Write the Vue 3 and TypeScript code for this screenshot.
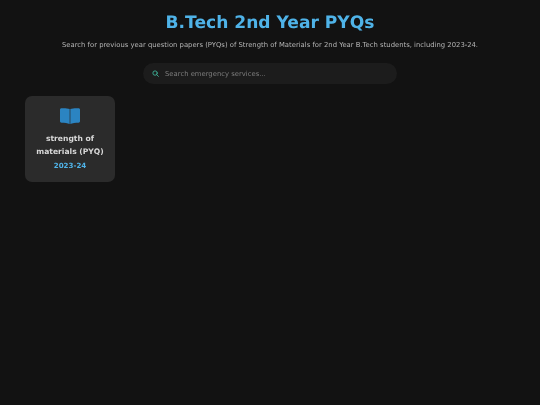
<script setup lang="ts">
interface Paper {
  title: string
  year: string
}
const papers: Paper[] = [{ title: 'strength of materials (PYQ)', year: '2023-24' }]
</script>

<template>
  <main class="page">
    <h1 class="title">B.Tech 2nd Year PYQs</h1>
    <p class="subtitle">Search for previous year question papers (PYQs) of Strength of Materials for 2nd Year B.Tech students, including 2023-24.</p>
    <div class="search">
      <svg class="search-icon" viewBox="0 0 24 24" fill="none" stroke="#3fb59a" stroke-width="3" stroke-linecap="round">
        <circle cx="10.500" cy="10.500" r="7.500" />
        <path d="M16 16l6 6" />
      </svg>
      <input class="search-input" type="text" placeholder="Search emergency services..." />
    </div>
    <section class="grid">
      <article v-for="paper in papers" :key="paper.title" class="card">
        <svg class="book" viewBox="0 0 40 32" fill="#2b84c2">
          <path d="M3 .500C9 .200 15.500 .500 19.300 2.200V32C15.500 30.300 9 29.500 3 29.500c-1.700 0-3-1.100-3-2.800V3.300C0 1.600 1.300.500 3 .500z" />
          <path d="M37 .500C31 .200 24.500 .500 20.700 2.200V32C24.500 30.300 31 29.500 37 29.500c1.700 0 3-1.100 3-2.800V3.300c0-1.700-1.300-2.800-3-2.800z" />
        </svg>
        <h2 class="card-title">{{ paper.title }}</h2>
        <span class="card-year">{{ paper.year }}</span>
      </article>
    </section>
  </main>
</template>

<style>
html, body { margin: 0; background: #121212; }
</style>

<style scoped>
.page {
  box-sizing: border-box;
  width: 540px;
  height: 405px;
  padding: 12px 25px 0;
  background: #121212;
  font-family: "DejaVu Sans", sans-serif;
  text-rendering: geometricPrecision;
  overflow: hidden;
  filter: blur(0.3px);
}
.title {
  margin: 0;
  text-align: center;
  color: #4fb3e8;
  font-size: 17.1px;
  line-height: 22px;
  font-weight: 700;
}
.subtitle {
  margin: 6px 0 0;
  text-align: center;
  color: #b5b5b5;
  font-size: 6.84px;
  line-height: 11px;
}
.search {
  box-sizing: border-box;
  display: flex;
  align-items: center;
  gap: 6px;
  width: 254px;
  height: 21px;
  margin: 12px auto 0;
  padding: 0 12px 0 9px;
  border-radius: 11px;
  background: #1c1c1c;
}
.search-icon { width: 7px; height: 7px; flex: none; }
.search-input {
  flex: 1;
  min-width: 0;
  padding: 0;
  border: 0;
  outline: 0;
  background: transparent;
  color: #ccc;
  font: 6.84px "DejaVu Sans", sans-serif;
}
.search-input::placeholder { color: #7d7d7d; opacity: 1; }
.grid {
  display: grid;
  grid-template-columns: repeat(auto-fill, 90px);
  margin-top: 12px;
}
.card {
  box-sizing: border-box;
  display: flex;
  flex-direction: column;
  align-items: center;
  height: 85.500px;
  padding: 12px 8px 0;
  border-radius: 7px;
  background: #2b2b2b;
  text-align: center;
}
.book { width: 20px; height: 16px; }
.card-title {
  margin: 9px 0 0;
  color: #d8d8d8;
  font-size: 7.6px;
  line-height: 12.500px;
  font-weight: 700;
}
.card-year {
  margin-top: 2px;
  color: #4fb3e8;
  font-size: 7.1px;
  line-height: 11px;
  font-weight: 700;
}
</style>
